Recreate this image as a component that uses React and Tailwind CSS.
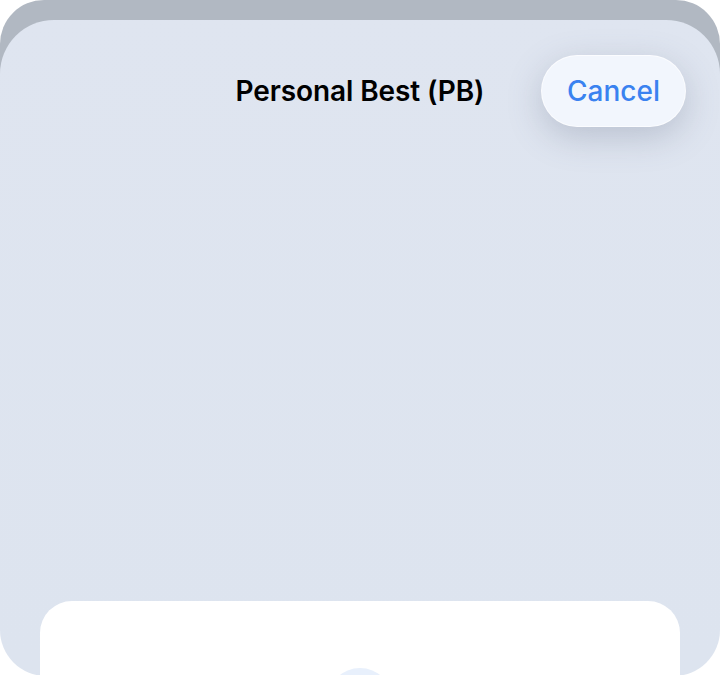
export default function App() {
  return (
    <div className="h-[675px] w-[720px] overflow-hidden bg-white" style={{ fontFamily: "Inter, 'Noto Sans', sans-serif" }}>
      <div className="h-[720px] rounded-t-[44px] bg-[linear-gradient(to_bottom,#b1b8c2_0px,#b1b8c2_300px,#ffffff_300px)] pt-[20px]">
        <div className="relative flex h-[656px] flex-col overflow-hidden rounded-t-[54px] rounded-b-[46px] bg-gradient-to-b from-[#dfe5f0] to-[#dde4ef]">
          <header className="relative flex h-[106px] items-start justify-center pt-[53px]">
            <h1 className="text-[28px] leading-[36px] font-semibold tracking-[-0.1px] text-black">Personal Best (PB)</h1>
            <button className="absolute right-[34px] top-[35px] flex h-[72px] w-[145px] items-center justify-center rounded-full border border-white/70 bg-[#f2f6fd] text-[28px] font-medium text-[#3a82f0] shadow-[0_10px_34px_rgba(90,100,125,0.28)]">
              Cancel
            </button>
          </header>
          <div className="flex-1" />
          <section className="mx-[40px] flex h-[75px] justify-center rounded-t-[32px] bg-white pt-[67px]">
            <div className="h-[64px] w-[64px] shrink-0 rounded-full bg-[#e8f0fc]" />
          </section>
        </div>
      </div>
    </div>
  );
}
